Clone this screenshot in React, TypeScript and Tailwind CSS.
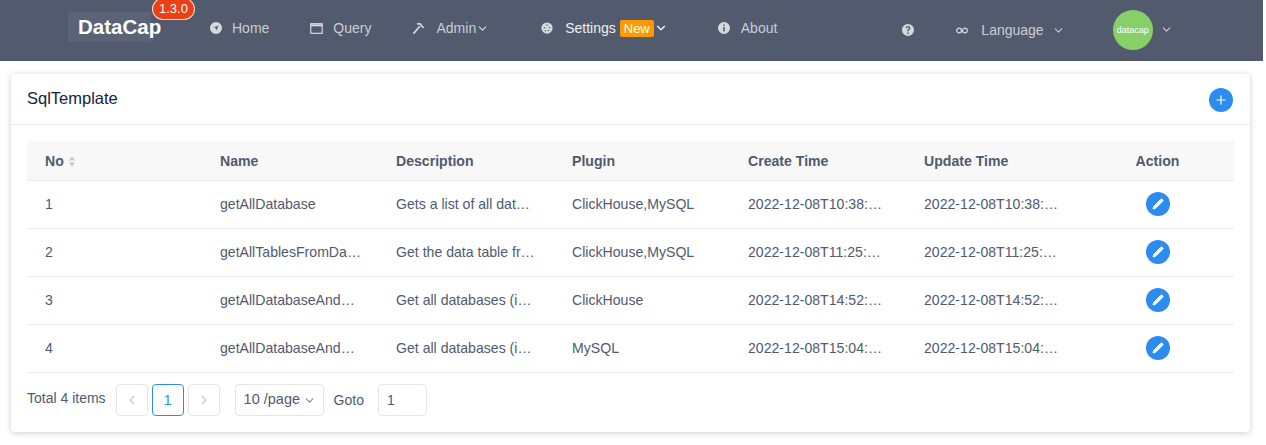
import { ChevronDown, ChevronLeft, ChevronRight, Plus, Pencil } from "lucide-react";
import { ReactNode } from "react";

const FONT = "font-['Liberation_Sans',Arial,sans-serif]";

const rows = [
  ["1", "getAllDatabase", "Gets a list of all dat…", "ClickHouse,MySQL", "2022-12-08T10:38:…", "2022-12-08T10:38:…"],
  ["2", "getAllTablesFromDa…", "Get the data table fr…", "ClickHouse,MySQL", "2022-12-08T11:25:…", "2022-12-08T11:25:…"],
  ["3", "getAllDatabaseAnd…", "Get all databases (i…", "ClickHouse", "2022-12-08T14:52:…", "2022-12-08T14:52:…"],
  ["4", "getAllDatabaseAnd…", "Get all databases (i…", "MySQL", "2022-12-08T15:04:…", "2022-12-08T15:04:…"],
];

function Dot({ children }: { children: ReactNode }) {
  return (
    <svg viewBox="0 0 16 16" className="w-[12px] h-[12px] shrink-0 text-[#d5d8dd]" fill="currentColor">
      {children}
    </svg>
  );
}

const HomeIcon = () => (
  <Dot>
    <path fillRule="evenodd" d="M8 0a8 8 0 1 1 0 16A8 8 0 0 1 8 0Zm3.500 4.500L5 7.200l2.600 1.200 1.200 2.600 2.700-6.500Z" />
  </Dot>
);
const QueryIcon = () => (
  <svg viewBox="0 0 14 12" className="w-[13px] h-[11px] shrink-0 text-[#d5d8dd]" fill="none" stroke="currentColor">
    <rect x="0.750" y="0.750" width="12.500" height="10.500" strokeWidth="1.300" />
    <path d="M0.750 2.500h12.500" strokeWidth="2.200" />
  </svg>
);
const AdminIcon = () => (
  <svg viewBox="0 0 14 14" className="w-[13px] h-[13px] shrink-0 text-[#d5d8dd]" fill="none" stroke="currentColor" strokeWidth="1.800">
    <path d="M1.500 12.500 8.500 4.500" />
    <path d="M5.500 2h3.200l3.800 4.500" />
  </svg>
);
const SettingsIcon = () => (
  <Dot>
    <path
      fillRule="evenodd"
      d="M8 0.500a7.500 7.500 0 1 1 0 15 7.500 7.500 0 0 1 0-15ZM8 3a1 1 0 1 0 0 2 1 1 0 0 0 0-2ZM4.500 6.500a1 1 0 1 0 0 2 1 1 0 0 0 0-2ZM11.500 6.500a1 1 0 1 0 0 2 1 1 0 0 0 0-2ZM6 10.500a1 1 0 1 0 0 2 1 1 0 0 0 0-2ZM10 10.500a1 1 0 1 0 0 2 1 1 0 0 0 0-2Z"
    />
  </Dot>
);
const AboutIcon = () => (
  <Dot>
    <path fillRule="evenodd" d="M8 0a8 8 0 1 1 0 16A8 8 0 0 1 8 0ZM7 3.200v2.200h2V3.200H7Zm0 3.600v6h2v-6H7Z" />
  </Dot>
);
const HelpIcon = () => (
  <Dot>
    <path fillRule="evenodd" d="M8 0a8 8 0 1 1 0 16A8 8 0 0 1 8 0ZM7 11.200v2h2v-2H7Zm1-8.600c-1.800 0-3 1.100-3.100 2.900h1.800c.1-.8.5-1.300 1.300-1.300.7 0 1.200.4 1.200 1 0 .5-.3.9-.9 1.300C7.400 7.100 7 7.700 7 8.700v.9h2v-.6c0-.6.2-.9.8-1.300C10.600 7.200 11.100 6.500 11.100 5.500 11.100 3.800 9.800 2.600 8 2.600Z" />
  </Dot>
);
const InfinityIcon = () => (
  <svg viewBox="0 0 14 8" className="w-[12px] h-[7px] shrink-0 text-[#d5d8dd]" fill="none" stroke="currentColor" strokeWidth="1.400">
    <circle cx="3.600" cy="4" r="2.800" />
    <circle cx="10.400" cy="4" r="2.800" />
  </svg>
);

function Cell({ className, children }: { className: string; children: ReactNode }) {
  return <div className={`flex items-center ${className}`}>{children}</div>;
}

const colW = ["w-[193px] pl-[18px]", "w-[176px]", "w-[176px]", "w-[176px]", "w-[176px]", "w-[176px]"];

export default function App() {
  return (
    <div className={`w-[1266px] h-[445px] overflow-hidden bg-white ${FONT}`}>
      <header className="h-[61px] w-[1263px] bg-[#525b6e] flex items-start text-[14px] leading-[20px] text-[#c9ccd3]">
        <div className="ml-[68px] mt-[12px] w-[83px] h-[30px] bg-[#5b6477] rounded-[2px] relative flex items-center">
          <span className="text-[20.500px] leading-[26px] font-bold text-white ml-[10px] whitespace-nowrap">DataCap</span>
          <span className="absolute left-[84px] top-[-14px] w-[43px] h-[22px] rounded-full bg-[#ed4014] border border-white/80 text-white text-[13px] leading-[19px] text-center z-10">1.3.0</span>
        </div>
        <div className="flex items-center ml-[59px] mt-[18px]">
          <HomeIcon />
          <span className="ml-[10px]">Home</span>
        </div>
        <div className="flex items-center ml-[41px] mt-[18px]">
          <QueryIcon />
          <span className="ml-[10px]">Query</span>
        </div>
        <div className="flex items-center ml-[41px] mt-[18px]">
          <AdminIcon />
          <span className="ml-[11px]">Admin</span>
          <ChevronDown size={13} className="text-[#d5d8dd]" />
        </div>
        <div className="flex items-center ml-[52px] mt-[18px]">
          <SettingsIcon />
          <span className="ml-[12px] text-white/90">Settings</span>
          <span className="ml-[4px] w-[34px] h-[17px] mt-[1px] bg-[#ff9900] rounded-[2px] text-white text-[13px] leading-[18px] text-center">New</span>
          <ChevronDown size={14} className="text-white" />
        </div>
        <div className="flex items-center ml-[50px] mt-[18px]">
          <AboutIcon />
          <span className="ml-[11px]">About</span>
        </div>
        <div className="ml-[125px] mt-[24px]"><HelpIcon /></div>
        <div className="flex items-center ml-[42px] mt-[20px]">
          <InfinityIcon />
          <span className="ml-[13px]">Language</span>
          <ChevronDown size={13} className="ml-[8px]" />
        </div>
        <div className="ml-[48px] mt-[10px] w-[40px] h-[40px] rounded-full bg-[#87d068] text-white text-[9px] leading-[40px] text-center">datacap</div>
        <ChevronDown size={13} className="ml-[7px] mt-[23px]" />
      </header>

      <main className="ml-[11px] mt-[13px] w-[1239px] h-[358px] bg-white rounded-[4px] shadow-[0_1px_6px_rgba(0,0,0,0.2)] flex flex-col">
        <div className="h-[51px] border-b border-[#e8eaec] flex items-center justify-between pl-[16px] pr-[17px] shrink-0">
          <span className="text-[16.500px] leading-[22px] text-[#17233d] mb-[2px]">SqlTemplate</span>
          <button className="w-[24px] h-[24px] rounded-full bg-[#2d8cf0] flex items-center justify-center mt-[2px]">
            <Plus size={14} className="text-white" />
          </button>
        </div>

        <div className="mx-[16px] mt-[16px] text-[14.100px] text-[#515a6e]">
          <div className="flex h-[40px] pt-[2px] bg-[#f8f8f9] border-b border-[#e8eaec] font-bold">
            <Cell className={colW[0]}>
              No
              <svg viewBox="0 0 8 12" className="ml-[4px] w-[8px] h-[11px]" fill="#c5c8ce">
                <path d="M4 0.500 7.500 5H0.500ZM4 11.500 0.500 7h7Z" />
              </svg>
            </Cell>
            <Cell className={colW[1]}>Name</Cell>
            <Cell className={colW[2]}>Description</Cell>
            <Cell className={colW[3]}>Plugin</Cell>
            <Cell className={colW[4]}>Create Time</Cell>
            <Cell className={colW[5]}>Update Time</Cell>
            <Cell className="w-[115px] justify-center">Action</Cell>
          </div>
          {rows.map((r) => (
            <div key={r[0]} className="flex h-[48px] border-b border-[#e8eaec]">
              {r.map((c, i) => (
                <Cell key={i} className={`${colW[i]} whitespace-nowrap`}>{c}</Cell>
              ))}
              <Cell className="w-[116px] justify-center">
                <button className="w-[24px] h-[24px] mb-[1px] rounded-full bg-[#2d8cf0] flex items-center justify-center">
                  <Pencil size={12} fill="white" strokeWidth={1.500} className="text-white" />
                </button>
              </Cell>
            </div>
          ))}
        </div>

        <div className="ml-[16px] mt-[11px] flex items-start text-[14px] text-[#515a6e]">
          <span className="mt-[4px] leading-[20px]">Total 4 items</span>
          <div className="ml-[10px] w-[32px] h-[32px] border border-[#e3e5e8] rounded-[4px] flex items-center justify-center">
            <ChevronLeft size={14} className="text-[#c5c8ce]" />
          </div>
          <div className="ml-[4px] w-[32px] h-[32px] border border-[#2d8cf0] rounded-[4px] flex items-center justify-center text-[#2d8cf0]">1</div>
          <div className="ml-[4px] w-[32px] h-[32px] border border-[#e3e5e8] rounded-[4px] flex items-center justify-center">
            <ChevronRight size={14} className="text-[#c5c8ce]" />
          </div>
          <div className="ml-[15px] w-[89px] h-[32px] border border-[#e3e5e8] rounded-[4px] flex items-center pl-[8px] text-[14.500px]">
            10 /page
            <ChevronDown size={13} className="ml-[3px] text-[#808695]" />
          </div>
          <span className="ml-[10px] h-[32px] leading-[32px]">Goto</span>
          <div className="ml-[14px] w-[49px] h-[32px] border border-[#e3e5e8] rounded-[4px] flex items-center pl-[8px]">1</div>
        </div>
      </main>
    </div>
  );
}
